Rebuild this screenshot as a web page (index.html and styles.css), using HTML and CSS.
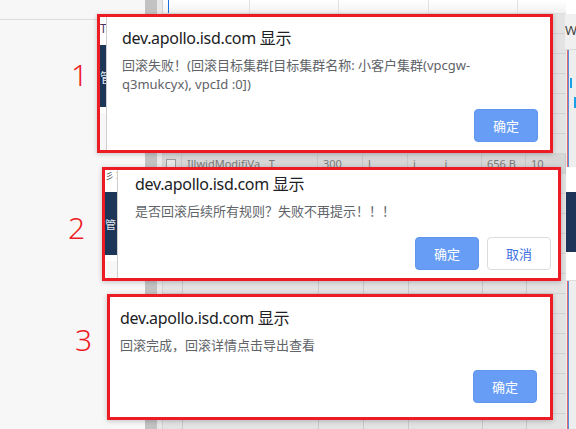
FILE: index.html
```html
<!DOCTYPE html>
<html lang="zh-CN">
<head>
<meta charset="utf-8">
<title>Apollo alerts</title>
<link rel="stylesheet" href="styles.css">
</head>
<body>
<div class="page">
  <aside class="side"><div class="side-top"></div></aside>
  <div class="scroll"></div>
  <div class="gutter"></div>
  <main class="main">
    <div class="table">
      <div class="thead">
        <div class="th th-0"></div>
        <div class="th th-1"></div>
        <div class="th th-2"></div>
        <div class="th th-3"></div>
        <div class="th th-4"></div>
        <div class="th th-5"></div>
      </div>
      <div class="tbody">
        <div class="trow">
          <div class="td td-check"><span class="check"></span></div>
          <div class="td">IllwidModifiVa&nbsp;&nbsp;&nbsp;T</div>
          <div class="td">300</div>
          <div class="td">l</div>
          <div class="td">i&nbsp;&nbsp;&nbsp;&nbsp;&nbsp;&nbsp;&nbsp;&nbsp;&nbsp;&nbsp;i</div>
          <div class="td">656 B</div>
          <div class="td">10</div>
        </div>
      </div>
    </div>
    <div class="rail">
      <div class="r-top"></div>
      <div class="r-w">W</div>
      <div class="r-lines r-lines-1"><span class="mark mark-1"></span><span class="mark mark-2"></span></div>
      <div class="r-white r-white-1"></div>
      <div class="r-nav"></div>
      <div class="r-white r-white-2"></div>
      <div class="r-lines r-lines-2"></div>
    </div>
  </main>
</div>

<div class="overlay">
  <span class="num num-1">1</span>
  <section class="shot shot-1">
    <div class="peek peek-1">
      <div class="pk-top">T</div>
      <div class="pk-nav">管</div>
      <div class="pk-rest"></div>
    </div>
    <div class="dlg">
      <div class="dlg-title">dev.apollo.isd.com 显示</div>
      <div class="dlg-msg">回滚失败！(回滚目标集群[目标集群名称: 小客户集群(vpcgw-<br>q3mukcyx), vpcId :0])</div>
      <div class="dlg-actions"><button class="btn btn-primary">确定</button></div>
    </div>
  </section>

  <span class="num num-2">2</span>
  <section class="shot shot-2">
    <div class="peek peek-2">
      <div class="pk-top">彡 I</div>
      <div class="pk-nav">管</div>
      <div class="pk-rest"></div>
    </div>
    <div class="dlg">
      <div class="dlg-title">dev.apollo.isd.com 显示</div>
      <div class="dlg-msg">是否回滚后续所有规则？失败不再提示！！！</div>
      <div class="dlg-actions">
        <button class="btn btn-primary">确定</button>
        <button class="btn btn-default">取消</button>
      </div>
    </div>
  </section>

  <span class="num num-3">3</span>
  <section class="shot shot-3">
    <div class="dlg">
      <div class="dlg-title">dev.apollo.isd.com 显示</div>
      <div class="dlg-msg">回滚完成，回滚详情点击导出查看</div>
      <div class="dlg-actions"><button class="btn btn-primary">确定</button></div>
    </div>
  </section>
</div>
</body>
</html>
```

FILE: styles.css
```css
* { box-sizing: border-box; }
html, body { margin: 0; padding: 0; }
body {
  width: 576px;
  height: 429px;
  overflow: hidden;
  position: relative;
  background: #f7f7f7;
  font-family: "Noto Sans", "Noto Sans CJK SC", sans-serif;
}

/* ---------- background page ---------- */
.page { display: flex; height: 429px; }
.side { width: 145px; background: #f7f7f7; }
.side-top { height: 20px; border-bottom: 1px solid #dcdcdc; }
.scroll { width: 12px; background: #c2c2c2; }
.gutter { width: 6px; background: #e8e8e8; border-right: 1px solid #d2d2d2; }
.main { flex: 1; display: flex; }
.table { width: 403px; display: flex; flex-direction: column; }
.thead {
  height: 14px;
  display: flex;
  background: linear-gradient(#ffffff, #f2f2f2);
  border-bottom: 1px solid #dedede;
}
.th { border-right: 1px solid #e2e2e2; }
.th-0 { width: 6px; border-right: 1px solid #1a6fd8; }
.th-1 { width: 81px; }
.th-2 { width: 89px; }
.th-3 { width: 90px; }
.th-4 { width: 89px; }
.th-5 { flex: 1; border-right: 0; }
.tbody {
  flex: 1;
  background-color: #e3e3e3;
  background-image:
    linear-gradient(#cacaca, #cacaca),
    linear-gradient(#cacaca, #cacaca),
    linear-gradient(#cacaca, #cacaca),
    linear-gradient(#cacaca, #cacaca),
    linear-gradient(#cacaca, #cacaca),
    linear-gradient(#cacaca, #cacaca),
    repeating-linear-gradient(to bottom, transparent 0 19px, #d2d2d2 19px 20px);
  background-repeat: no-repeat, no-repeat, no-repeat, no-repeat, no-repeat, no-repeat, repeat;
  background-size: 1px 100%, 1px 100%, 1px 100%, 1px 100%, 1px 100%, 1px 100%, auto;
  background-position: 19px 0, 155px 0, 200px 0, 245px 0, 319px 0, 363px 0, 0 0;
}
.trow {
  margin-top: 140px;
  height: 20px;
  display: grid;
  grid-template-columns: 19px 136px 45px 45px 74px 44px 1fr;
  background: #d6d6d6;
}
.td {
  font-size: 11px;
  line-height: 20px;
  color: #7a7a7a;
  padding-left: 5px;
  white-space: nowrap;
  overflow: hidden;
  border-right: 1px solid #c6c6c6;
}
.td-check { padding-left: 3px; display: flex; align-items: center; }
.check { width: 10px; height: 10px; border: 1px solid #9a9a9a; background: #e6e6e6; }

.rail { width: 10px; display: flex; flex-direction: column; }
.r-top { height: 14px; background: #fff; }
.r-w {
  height: 36px;
  background: #f0f0f0;
  border-bottom: 1px solid #dadada;
  font-size: 13px;
  line-height: 32px;
  color: #444;
  margin-left: -1px;
  overflow: hidden;
}
.r-lines {
  position: relative;
  background-color: #eeeeee;
  background-image:
    linear-gradient(#e06a6a, #e06a6a),
    linear-gradient(#5a8fe0, #5a8fe0);
  background-repeat: no-repeat;
  background-size: 1px 100%, 1px 100%;
  background-position: 1px 0, 2px 0;
}
.r-lines-1 { height: 117px; display: flex; flex-direction: column; }
.r-lines-2 { flex: 1; }
.mark { display: block; width: 2px; background: #17a2e8; }
.mark-1 { height: 10px; margin: 28px 0 0 4px; }
.mark-2 { height: 11px; margin: 9px 0 0 8px; }
.r-white { background: #fff; }
.r-white-1 { height: 25px; }
.r-white-2 { height: 29px; border-bottom: 1px solid #ddd; }
.r-nav { height: 60px; background: #1e3458; }

/* ---------- annotated alert screenshots (overlay) ---------- */
.overlay { position: absolute; left: 0; top: 0; width: 576px; height: 429px; }
.num {
  position: absolute;
  font-family: "Noto Sans", "DejaVu Sans", sans-serif;
  font-weight: 300;
  font-size: 30px;
  line-height: 30px;
  color: #ed1c24;
}
.num-1 { left: 71px; top: 60px; }
.num-2 { left: 68px; top: 213px; }
.num-3 { left: 75px; top: 325px; }

.shot {
  position: absolute;
  display: flex;
  border: 3px solid #ed1c24;
  background: #fff;
  overflow: hidden;
  box-shadow: 0 1px 5px rgba(0, 0, 0, 0.22);
}
.shot-1 { left: 97px; top: 14px; width: 456px; height: 139px; }
.shot-2 { left: 102px; top: 167px; width: 459px; height: 114px; }
.shot-3 { left: 107px; top: 294px; width: 446px; height: 126px; }

.peek { display: flex; flex-direction: column; background: #fafafa; }
.peek-1 { width: 6px; }
.peek-2 { width: 12px; }
.pk-top {
  font-size: 12px;
  color: #4b3566;
  white-space: nowrap;
  overflow: hidden;
  background: #fff;
}
.peek-1 .pk-top { height: 28px; line-height: 20px; padding-top: 2px; }
.peek-2 .pk-top { height: 22px; font-size: 9px; line-height: 12px; color: #333; }
.pk-nav {
  background: #1d3557;
  color: #e8ecf3;
  font-size: 13px;
  white-space: nowrap;
  overflow: hidden;
  display: flex;
  align-items: center;
}
.peek-1 .pk-nav { height: 62px; }
.peek-2 .pk-nav { height: 63px; font-size: 11px; padding-left: 0; }
.pk-rest { flex: 1; border-top: 6px solid #fff; border-bottom: 0; background: #f7f7f7; }

.dlg {
  flex: 1;
  display: flex;
  flex-direction: column;
  background: #fff;
}
.shot-1 .dlg { border-left: 1px solid #cfcfcf; padding: 11px 12px 8px 15px; }
.shot-2 .dlg { border-left: 1px solid #cfcfcf; padding: 4px 7px 8px 17px; }
.shot-3 .dlg { padding: 11px 13px 14px 10px; }

.dlg-title {
  font-size: 16px;
  line-height: 20px;
  letter-spacing: -0.3px;
  color: #202124;
  white-space: nowrap;
}
.dlg-msg {
  margin-top: 8px;
  font-size: 13px;
  line-height: 19px;
  color: #606368;
}
.dlg-actions {
  margin-top: auto;
  display: flex;
  justify-content: flex-end;
  gap: 8px;
}
.btn {
  width: 64px;
  height: 33px;
  border-radius: 4px;
  font-family: "Noto Sans CJK SC", sans-serif;
  font-size: 13px;
  padding: 0;
}
.btn-primary { background: #689df6; border: 1px solid #5f95ee; color: #fff; }
.btn-default { background: #fff; border: 1px solid #dadce0; color: #3d6fe0; }
```
